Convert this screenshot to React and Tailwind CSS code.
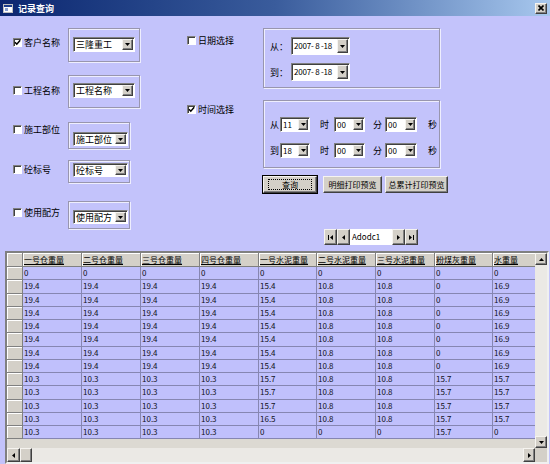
import React from "react";

const cx = (...a) => a.filter(Boolean).join(" ");

const sunken =
  "border border-t-[#808080] border-l-[#808080] border-b-white border-r-white shadow-[inset_1px_1px_0_#404040]";
const raised =
  "border border-t-[#f6f4f0] border-l-[#f6f4f0] border-b-[#404040] border-r-[#404040] bg-[#d4d0c8] shadow-[inset_-1px_-1px_0_#808080]";
const etched =
  "border border-[#9896ae] shadow-[inset_1px_1px_0_#eeeefe,1px_1px_0_#eeeefe]";

function Arrow({ dir = "down" }) {
  if (dir === "down")
    return (
      <svg width="5" height="3" viewBox="0 0 5 3">
        <path d="M0 0h5L2.5 3z" fill="#000" />
      </svg>
    );
  if (dir === "up")
    return (
      <svg width="5" height="3" viewBox="0 0 5 3">
        <path d="M0 3h5L2.5 0z" fill="#000" />
      </svg>
    );
  if (dir === "left")
    return (
      <svg width="3" height="5" viewBox="0 0 3 5">
        <path d="M3 0v5L0 2.5z" fill="#000" />
      </svg>
    );
  return (
    <svg width="3" height="5" viewBox="0 0 3 5">
      <path d="M0 0v5L3 2.5z" fill="#000" />
    </svg>
  );
}

function Check({ checked }) {
  return (
    <span className={cx("flex h-[9px] w-[9px] shrink-0 items-center justify-center bg-white", sunken)}>
      {checked && (
        <svg width="7" height="7" viewBox="0 0 7 7">
          <path d="M1 3.2 L2.8 5.2 L6.2 1.2" stroke="#000" strokeWidth="1.5" fill="none" />
        </svg>
      )}
    </span>
  );
}

function Combo({ text, cls, btn = "w-[11px]", txt = "text-[9px]" }) {
  return (
    <div className={cx("flex bg-white", sunken, cls)}>
      <span className={cx("flex flex-1 items-center overflow-hidden whitespace-pre pl-[2px] leading-none", txt)}>
        {text}
      </span>
      <span className={cx("m-[1px] flex shrink-0 items-center justify-center", raised, btn)}>
        <Arrow />
      </span>
    </div>
  );
}

function Btn({ children, cls, def }) {
  return (
    <div className={cx("flex items-center justify-center whitespace-nowrap text-[8px] leading-none", raised, def && "outline outline-1 outline-black", cls)}>
      {def ? (
        <span className="flex h-[11px] w-[44px] items-center justify-center border border-dotted border-black">{children}</span>
      ) : (
        children
      )}
    </div>
  );
}

const leftRows = [
  { label: "客户名称", checked: true, text: "三隆重工", row: "mt-[12px] h-[34px]", lab: "mt-[9px]", grp: "w-[72px]", pad: "pt-[8px]", combo: "w-[62px] h-[15px]" },
  { label: "工程名称", text: "工程名称", row: "mt-[13px] h-[33px]", lab: "mt-[10px]", grp: "w-[72px]", pad: "pt-[7px]", combo: "w-[62px] h-[15px]" },
  { label: "施工部位", text: "施工部位", row: "mt-[14px] h-[27px]", lab: "mt-[2px]", grp: "w-[62px]", pad: "pt-[9px]", combo: "w-[55px] h-[14px]" },
  { label: "砼标号", text: "砼标号", row: "mt-[11px] h-[23px]", lab: "mt-[4px]", grp: "w-[62px]", pad: "pt-[2px]", combo: "w-[55px] h-[14px]" },
  { label: "使用配方", text: "使用配方", row: "mt-[18px] h-[28px]", lab: "mt-[6px]", grp: "w-[62px]", pad: "pt-[8px]", combo: "w-[55px] h-[14px]" },
];

const headers = ["一号仓重量", "二号仓重量", "三号仓重量", "四号仓重量", "一号水泥重量", "二号水泥重量", "三号水泥重量", "粉煤灰重量", "水重量"];
const colW = ["w-[59px]", "w-[59px]", "w-[59px]", "w-[59px]", "w-[58px]", "w-[59px]", "w-[59px]", "w-[58px]", "w-[44px]"];

const r19 = ["19.4", "19.4", "19.4", "19.4", "15.4", "10.8", "10.8", "0", "16.9"];
const r10 = ["10.3", "10.3", "10.3", "10.3", "15.7", "10.8", "10.8", "15.7", "15.7"];
const rows = [
  ["0", "0", "0", "0", "0", "0", "0", "0", "0"],
  r19, r19, r19, r19, r19, r19, r19,
  r10, r10, r10,
  ["10.3", "10.3", "10.3", "10.3", "16.5", "10.8", "10.8", "15.7", "15.7"],
  ["10.3", "10.3", "10.3", "10.3", "0", "0", "0", "15.7", "0"],
];

function TitleBar() {
  return (
    <div className="flex h-[16px] items-center bg-linear-to-r from-[#0c2670] via-[#3a5c9c] to-[#a8c8ee] pl-[3px] pr-[3px]">
      <svg width="10" height="9" viewBox="0 0 10 9">
        <rect x="0.5" y="0.5" width="9" height="8" fill="#fff" stroke="#c0c0c0" />
        <rect x="1" y="1" width="8" height="2" fill="#1c3c8c" />
        <rect x="2" y="4" width="3" height="3" fill="#8aa0d0" />
      </svg>
      <span className="ml-[5px] text-[9px] font-bold leading-none text-white">记录查询</span>
      <div className={cx("ml-auto flex h-[11px] w-[12px] items-center justify-center", raised)}>
        <svg width="6" height="6" viewBox="0 0 6 6">
          <path d="M0.5 0.5L5.5 5.5M5.5 0.5L0.5 5.5" stroke="#000" strokeWidth="1.6" />
        </svg>
      </div>
    </div>
  );
}

function LeftCol() {
  return (
    <div className="flex w-[140px] shrink-0 flex-col pl-[13px]">
      {leftRows.map((r) => (
        <div key={r.label} className={cx("flex", r.row)}>
          <div className={cx("flex h-[10px] w-[55px] items-center gap-[2px]", r.lab)}>
            <Check checked={r.checked} />
            <span className="text-[9px] leading-none">{r.label}</span>
          </div>
          <div className={cx("h-full pl-[4px]", etched, r.grp, r.pad)}>
            <Combo text={r.text} cls={r.combo} />
          </div>
        </div>
      ))}
    </div>
  );
}

function MidCol() {
  return (
    <div className="flex w-[123px] shrink-0 flex-col pl-[47px]">
      <div className="mt-[19px] flex h-[10px] items-center gap-[2px]">
        <Check />
        <span className="text-[9px] leading-none">日期选择</span>
      </div>
      <div className="mt-[59px] flex h-[10px] items-center gap-[2px]">
        <Check checked />
        <span className="text-[9px] leading-none">时间选择</span>
      </div>
    </div>
  );
}

function TimeRow({ a, h }) {
  return (
    <div className="flex h-[15px] items-center text-[9px] leading-none">
      <span className="w-[16px] pl-[6px]">{a}</span>
      <Combo text={h} cls="w-[30px] h-[15px]" btn="w-[10px]" txt="text-[8px]" />
      <span className="w-[24px] pl-[10px]">时</span>
      <Combo text="00" cls="w-[31px] h-[15px]" btn="w-[10px]" txt="text-[8px]" />
      <span className="w-[20px] pl-[8px]">分</span>
      <Combo text="00" cls="w-[32px] h-[15px]" btn="w-[10px]" txt="text-[8px]" />
      <span className="pl-[11px]">秒</span>
    </div>
  );
}

function NavBtn({ children }) {
  return <div className={cx("flex h-full w-[13px] items-center justify-center gap-[1px]", raised)}>{children}</div>;
}

function RightCol() {
  return (
    <div className="flex flex-col">
      <div className={cx("mt-[12px] h-[60px] w-[177px] pt-[8px]", etched)}>
        <div className="flex h-[18px] items-center">
          <span className="w-[27px] pl-[6px] text-[9px] leading-none">从：</span>
          <Combo text="2007- 8 -18" cls="w-[59px] h-[18px]" txt="text-[8px] tracking-[-0.2px]" />
        </div>
        <div className="mt-[8px] flex h-[18px] items-center">
          <span className="w-[27px] pl-[6px] text-[9px] leading-none">到：</span>
          <Combo text="2007- 8 -18" cls="w-[59px] h-[18px]" txt="text-[8px] tracking-[-0.2px]" />
        </div>
      </div>
      <div className={cx("mt-[12px] flex h-[68px] w-[177px] flex-col gap-[11px] pt-[16px]", etched)}>
        <TimeRow a="从" h="11" />
        <TimeRow a="到" h="18" />
      </div>
      <div className="mt-[8px] flex h-[17px]">
        <Btn def cls="w-[54px]">查询</Btn>
        <Btn cls="ml-[6px] w-[59px]">明细打印预览</Btn>
        <Btn cls="ml-[3px] w-[63px]">总累计打印预览</Btn>
      </div>
      <div className="ml-[61px] mt-[36px] flex h-[16px] w-[94px] bg-[#d4d0c8]">
        <NavBtn>
          <span className="h-[5px] w-[1px] bg-black" />
          <Arrow dir="left" />
        </NavBtn>
        <NavBtn>
          <Arrow dir="left" />
        </NavBtn>
        <div className="flex flex-1 items-center bg-white pl-[2px] text-[8px] leading-none">Adodc1</div>
        <NavBtn>
          <Arrow dir="right" />
        </NavBtn>
        <NavBtn>
          <Arrow dir="right" />
          <span className="h-[5px] w-[1px] bg-black" />
        </NavBtn>
      </div>
    </div>
  );
}

function Grid() {
  return (
    <div className="ml-[5px] flex h-[213px] w-[544px] flex-col border-2 border-t-[#808080] border-l-[#808080] border-b-[#f0f0f0] border-r-[#f0f0f0]">
      <div className="flex h-[195px]">
        <div className="flex w-[530px] flex-col overflow-hidden">
          <div className="flex h-[14px] shrink-0 bg-[#d4d0c8]">
            <div className="w-[16px] shrink-0 border-b border-r border-[#808080] shadow-[inset_1px_1px_0_#fff]" />
            {headers.map((h, i) => (
              <div
                key={h}
                className={cx("shrink-0 overflow-hidden whitespace-nowrap border-b border-r border-[#808080] pl-[1px] text-[8px] leading-[13px] underline shadow-[inset_1px_1px_0_#fff]", colW[i])}
              >
                {h}
              </div>
            ))}
          </div>
          {rows.map((r, ri) => (
            <div key={ri} className="flex h-[13.25px] shrink-0 bg-[#c0c0fc]">
              <div className="w-[16px] shrink-0 border-b border-r border-[#808080] bg-[#d4d0c8] shadow-[inset_1px_1px_0_#fff]" />
              {r.map((v, i) => (
                <div
                  key={i}
                  className={cx("shrink-0 overflow-hidden whitespace-nowrap border-b border-r border-[#8686b2] pl-[1px] text-[8px] leading-[12px] text-[#101020]", colW[i])}
                >
                  {v}
                </div>
              ))}
            </div>
          ))}
          <div className="flex-1 bg-[#dcd9d2]" />
        </div>
        <div className="flex w-[12px] flex-col bg-[#ebe9e5]">
          <div className={cx("flex h-[12px] items-center justify-center", raised)}>
            <Arrow dir="up" />
          </div>
          <div className="flex-1" />
          <div className={cx("flex h-[12px] items-center justify-center", raised)}>
            <Arrow dir="down" />
          </div>
        </div>
      </div>
      <div className="flex h-[14px]">
        <div className="flex w-[530px] bg-[#ebe9e5]">
          <div className={cx("flex w-[13px] items-center justify-center", raised)}>
            <Arrow dir="left" />
          </div>
          <div className={cx("w-[12px]", raised)} />
          <div className="flex-1" />
          <div className={cx("flex w-[12px] items-center justify-center", raised)}>
            <Arrow dir="right" />
          </div>
        </div>
        <div className="w-[12px] bg-[#d4d0c8]" />
      </div>
    </div>
  );
}

export default function App() {
  return (
    <div className="h-[464px] w-[550px] overflow-hidden bg-[#c3c3fb] font-['Noto_Sans_CJK_SC',sans-serif] text-black">
      <TitleBar />
      <div className="flex h-[235px]">
        <LeftCol />
        <MidCol />
        <RightCol />
      </div>
      <Grid />
    </div>
  );
}
